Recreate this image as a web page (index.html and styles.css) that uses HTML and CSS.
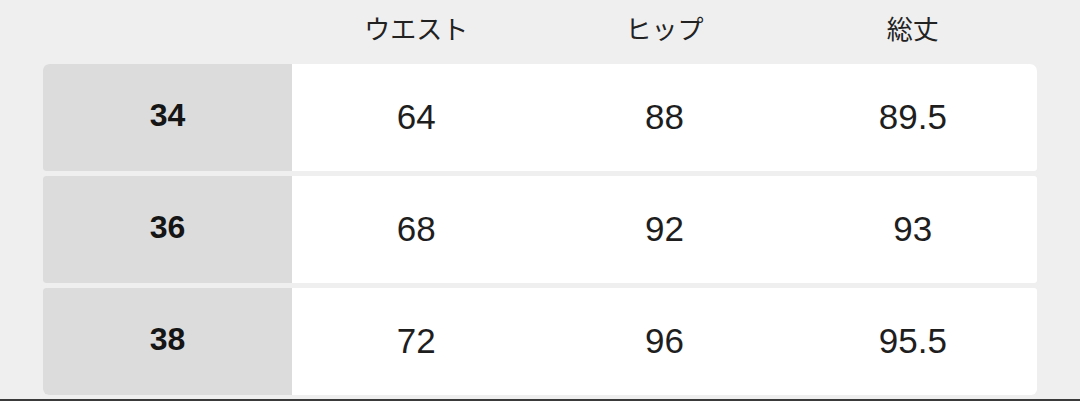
FILE: index.html
```html
<!DOCTYPE html>
<html lang="ja">
<head>
<meta charset="utf-8">
<link rel="stylesheet" href="styles.css">
</head>
<body>
<div class="page">
  <div class="head">
    <div></div>
    <div class="hcell">ウエスト</div>
    <div class="hcell">ヒップ</div>
    <div class="hcell">総丈</div>
  </div>
  <div class="table">
    <div class="row">
      <div class="size">34</div>
      <div class="val">64</div>
      <div class="val">88</div>
      <div class="val">89.5</div>
    </div>
    <div class="row">
      <div class="size">36</div>
      <div class="val">68</div>
      <div class="val">92</div>
      <div class="val">93</div>
    </div>
    <div class="row">
      <div class="size">38</div>
      <div class="val">72</div>
      <div class="val">96</div>
      <div class="val">95.5</div>
    </div>
  </div>
  <div class="bottomline"></div>
</div>
</body>
</html>
```

FILE: styles.css
```css
html, body {
  margin: 0;
  padding: 0;
  background: #efefef;
}
.page {
  height: 401px;
  display: flex;
  flex-direction: column;
  overflow: hidden;
}
.head {
  height: 64px;
  margin: 0 43px;
  display: grid;
  grid-template-columns: 249px repeat(3, 1fr);
  align-items: center;
  box-sizing: border-box;
  padding-bottom: 9px;
}
.hcell {
  text-align: center;
  font-family: "Noto Sans CJK JP", sans-serif;
  font-size: 26px;
  line-height: 1;
  color: #222;
  font-weight: 400;
}
.table {
  margin: 0 43px;
  display: flex;
  flex-direction: column;
  gap: 5px;
}
.row {
  height: 107px;
  display: grid;
  grid-template-columns: 249px repeat(3, 1fr);
  background: #fff;
  border-radius: 3px;
  overflow: hidden;
}
.row:first-child {
  border-top-left-radius: 6px;
  border-top-right-radius: 7px;
}
.row:last-child {
  border-bottom-left-radius: 6px;
  border-bottom-right-radius: 6px;
}
.size {
  background: #dcdcdc;
  display: flex;
  align-items: center;
  justify-content: center;
  font-family: "Liberation Sans", Arial, sans-serif;
  font-weight: bold;
  font-size: 32px;
  color: #151515;
  padding-bottom: 4px;
}
.val {
  display: flex;
  align-items: center;
  justify-content: center;
  font-family: "Liberation Sans", Arial, sans-serif;
  font-size: 35px;
  color: #1e1e1e;
  padding-bottom: 2px;
}
.bottomline {
  margin-top: auto;
  height: 2px;
  background: #3a3a3a;
}
```
